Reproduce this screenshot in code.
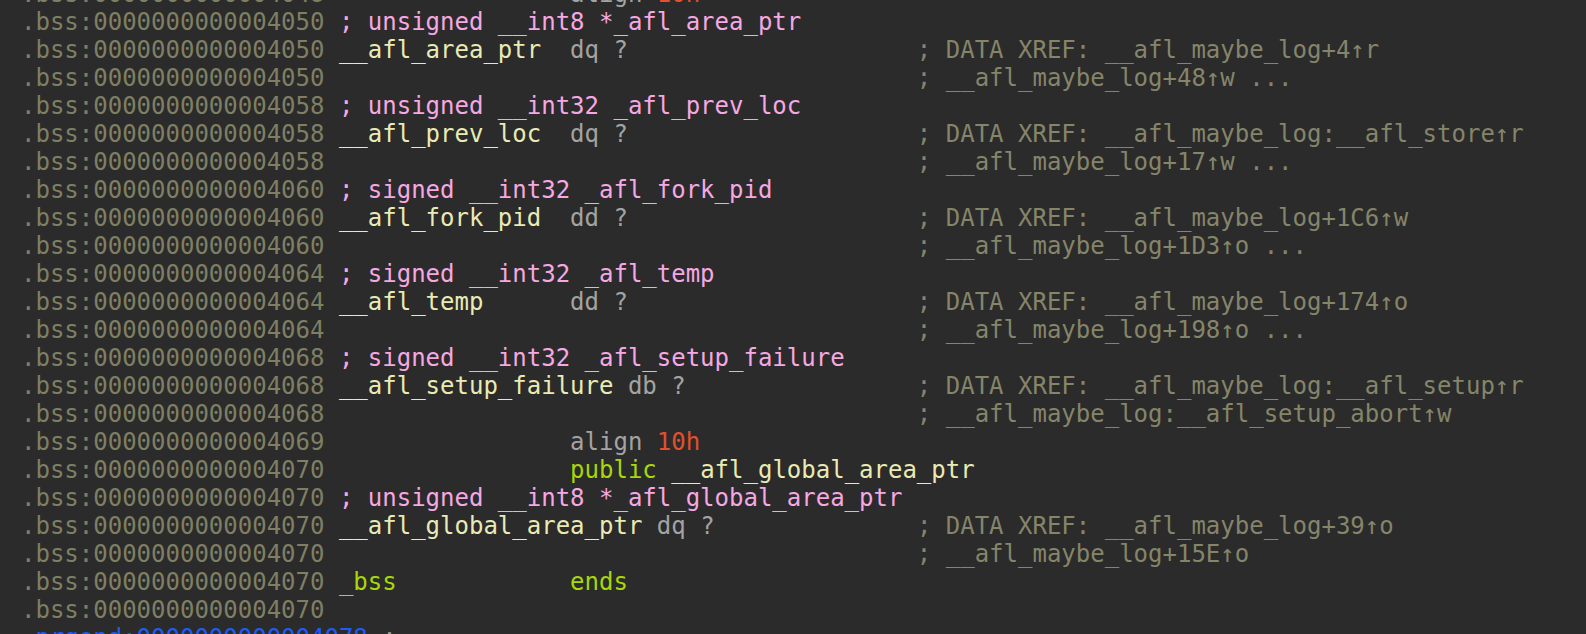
import React from "react";

type Seg = [string, string];

const A = "text-[#7f7f62]";
const P = "text-[#f5a8e2]";
const N = "text-[#eaeab4]";
const G = "text-[#a3a3a3]";
const C = "text-[#85856a]";
const R = "text-[#e2502c]";
const Y = "text-[#a8d70a]";
const B = "text-[#1e5cf7]";

const pad = (s: string, n: number) => s + " ".repeat(Math.max(0, n - s.length));

const addr = (a: string): Seg => [".bss:00000000000040" + a + " ", A];

const lines: Seg[][] = [
  [addr("48"), [pad("", 16), G], ["align ", G], ["10h", R]],
  [addr("50"), ["; unsigned __int8 *_afl_area_ptr", P]],
  [addr("50"), [pad("__afl_area_ptr", 16), N], [pad("dq ?", 24), G], ["; DATA XREF: __afl_maybe_log+4↑r", C]],
  [addr("50"), [" ".repeat(40), G], ["; __afl_maybe_log+48↑w ...", C]],
  [addr("58"), ["; unsigned __int32 _afl_prev_loc", P]],
  [addr("58"), [pad("__afl_prev_loc", 16), N], [pad("dq ?", 24), G], ["; DATA XREF: __afl_maybe_log:__afl_store↑r", C]],
  [addr("58"), [" ".repeat(40), G], ["; __afl_maybe_log+17↑w ...", C]],
  [addr("60"), ["; signed __int32 _afl_fork_pid", P]],
  [addr("60"), [pad("__afl_fork_pid", 16), N], [pad("dd ?", 24), G], ["; DATA XREF: __afl_maybe_log+1C6↑w", C]],
  [addr("60"), [" ".repeat(40), G], ["; __afl_maybe_log+1D3↑o ...", C]],
  [addr("64"), ["; signed __int32 _afl_temp", P]],
  [addr("64"), [pad("__afl_temp", 16), N], [pad("dd ?", 24), G], ["; DATA XREF: __afl_maybe_log+174↑o", C]],
  [addr("64"), [" ".repeat(40), G], ["; __afl_maybe_log+198↑o ...", C]],
  [addr("68"), ["; signed __int32 _afl_setup_failure", P]],
  [addr("68"), ["__afl_setup_failure ", N], [pad("db ?", 20), G], ["; DATA XREF: __afl_maybe_log:__afl_setup↑r", C]],
  [addr("68"), [" ".repeat(40), G], ["; __afl_maybe_log:__afl_setup_abort↑w", C]],
  [addr("69"), [pad("", 16), G], ["align ", G], ["10h", R]],
  [addr("70"), [pad("", 16), G], ["public ", Y], ["__afl_global_area_ptr", N]],
  [addr("70"), ["; unsigned __int8 *_afl_global_area_ptr", P]],
  [addr("70"), ["__afl_global_area_ptr ", N], [pad("dq ?", 18), G], ["; DATA XREF: __afl_maybe_log+39↑o", C]],
  [addr("70"), [" ".repeat(40), G], ["; __afl_maybe_log+15E↑o", C]],
  [addr("70"), [pad("_bss", 16), Y], ["ends", Y]],
  [addr("70"), ["", G]],
  [[".prgend:", B], ["0000000000004078 ", B], [";", G]],
];

export default function App() {
  return (
    <div className="h-[634px] w-full overflow-hidden bg-[#2b2b2b]">
      <div
        className="-mt-[20px] pl-[21px] text-[24px] leading-[28px] whitespace-pre"
        style={{ fontFamily: '"DejaVu Sans Mono", monospace' }}
      >
        {lines.map((line, i) => (
          <div key={i} className="h-[28px]">
            {line.map(([t, c], j) => (
              <span key={j} className={c}>
                {t}
              </span>
            ))}
          </div>
        ))}
      </div>
    </div>
  );
}
